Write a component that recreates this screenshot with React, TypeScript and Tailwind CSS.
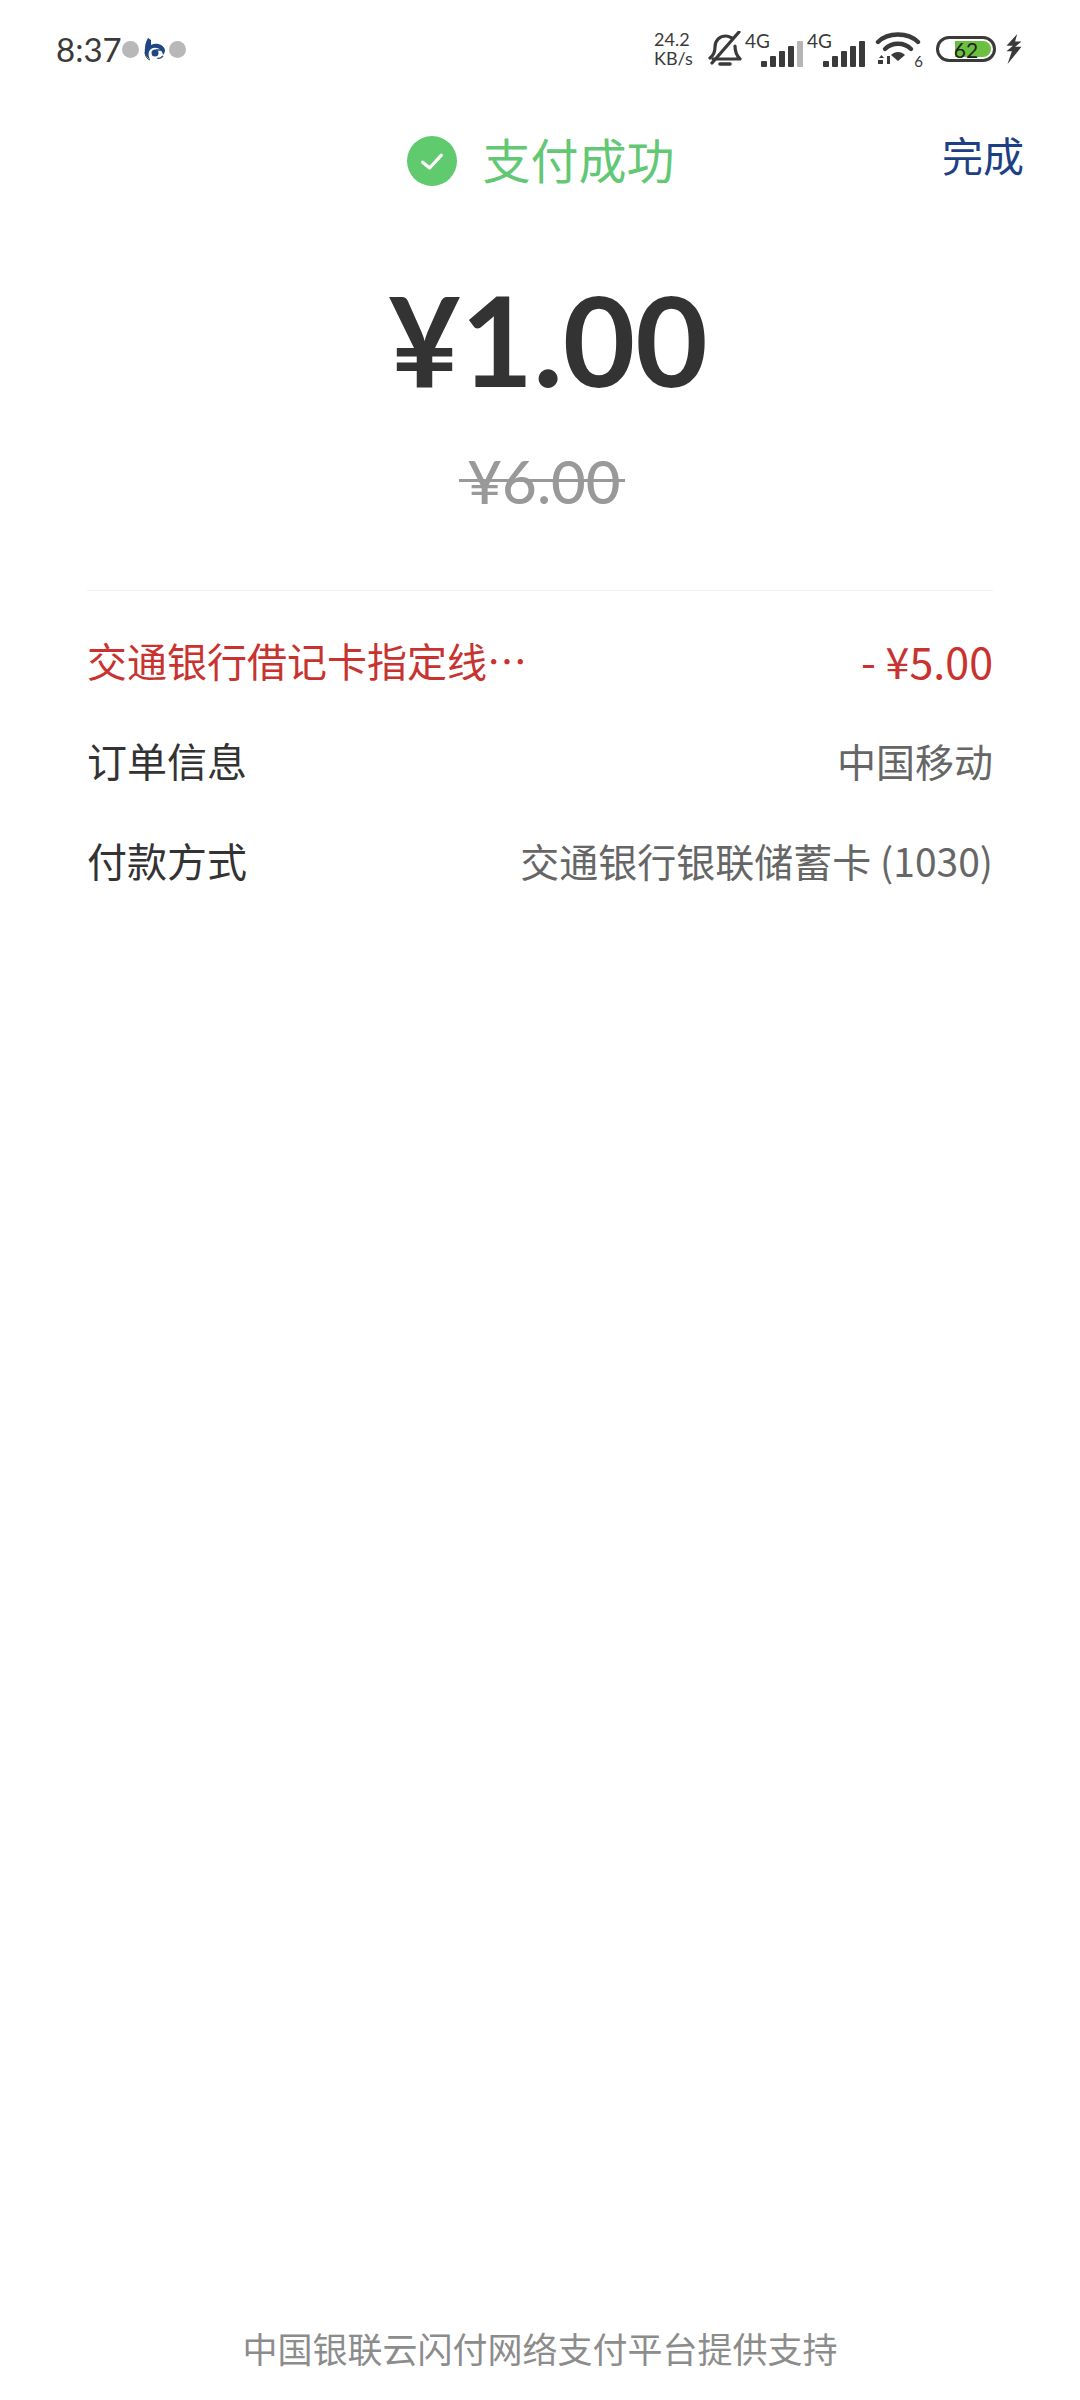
/* Payment success page */
import React from 'react';

const cjk = `font-['Noto_Sans_CJK_SC','Noto_Sans',sans-serif]`;

function UnionLogo() {
  return (
    <svg viewBox="0 0 24 24" className="w-[24px] h-[24px]">
      <path d="M6 1 L9 3 V8 C15 5 22 8 23 13 C23 15 22 17 21 18 C20 12 14 9 9 12 C6 14 6 19 8 22 C4 20 2 16 3 11 C3 8 4 4 6 1Z" fill="#1f4684" />
      <circle cx="13" cy="16" r="3.5" fill="#1f4684" />
      <path d="M14 13 H22 M15 21 C17 22 19 21 21 19" stroke="#1f4684" strokeWidth="1.3" fill="none" />
      <path d="M3 15 C3 19 5 22 8 23" stroke="#333" strokeWidth="1" fill="none" />
    </svg>
  );
}

function BellOff() {
  return (
    <svg viewBox="0 0 34 36" className="w-[34px] h-[36px]" fill="none" stroke="#3a3a3a" strokeWidth="3.2" strokeLinecap="round" strokeLinejoin="round">
      <path d="M2 27 C6 24 7 21 7 16 C7 9 12 5 18 5 C20 5 22 6 24 7" />
      <path d="M27 15 C27 21 29 25 32 28 H5" />
      <path d="M4 32 L31 1" />
      <path d="M12 33 H22" strokeWidth="3.6" />
    </svg>
  );
}

function Signal({ last }: { last: string }) {
  const bars = [6, 11, 16, 21, 26];
  return (
    <span className="flex items-end gap-[3px] h-[28px]">
      {bars.map((h, i) => (
        <span
          key={i}
          className={`w-[6px] rounded-[1px] ${i === 4 ? last : 'bg-[#3a3a3a]'}`}
          style={{ height: h }}
        />
      ))}
    </span>
  );
}

function Wifi() {
  return (
    <svg viewBox="0 0 46 36" className="w-[46px] h-[36px]">
      <g fill="none" stroke="#3a3a3a" strokeWidth="4.4" strokeLinecap="round">
        <path d="M3 11 C13 1 33 1 43 11" />
        <path d="M10 18 C17 11 29 11 36 18" />
      </g>
      <path d="M16 24 C20 20 26 20 30 24 L23 30Z" fill="#3a3a3a" />
      <path d="M4 27 H9 L6.5 24Z M12 25 H15 V33 H12Z M3 29 H8 V33 H3Z" fill="#3a3a3a" />
    </svg>
  );
}

function StatusBar() {
  return (
    <div className="h-[82px] pl-[56px] pr-[57px] pt-[16px] flex items-center justify-between text-[#3a3a3a]">
      <div className="flex items-center">
        <span className="text-[33px] leading-none font-['Lato',sans-serif] w-[66px]">8:37</span>
        <span className="w-[17px] h-[17px] rounded-full bg-[#b8b8b8]" />
        <span className="mx-[3px]"><UnionLogo /></span>
        <span className="w-[17px] h-[17px] rounded-full bg-[#b8b8b8]" />
      </div>
      <div className="flex items-center">
        <div className="flex flex-col text-[18px] leading-[19px] font-['Lato',sans-serif] w-[43px] items-start">
          <span>24.2</span>
          <span>KB/s</span>
        </div>
        <span className="ml-[11px]"><BellOff /></span>
        <span className="relative ml-[3px] w-[58px] h-[36px] flex items-end justify-end">
          <span className="absolute left-0 top-[-4px] text-[19px] font-['Lato',sans-serif]">4G</span>
          <Signal last="bg-[#b5b5b5]" />
        </span>
        <span className="relative ml-[4px] w-[58px] h-[36px] flex items-end justify-end">
          <span className="absolute left-0 top-[-4px] text-[19px] font-['Lato',sans-serif]">4G</span>
          <Signal last="bg-[#3a3a3a]" />
        </span>
        <span className="relative ml-[10px] w-[46px] h-[36px]">
          <Wifi />
          <span className="absolute right-[-2px] bottom-[-2px] text-[15px] leading-none font-['Lato',sans-serif]">6</span>
        </span>
        <span className="relative ml-[15px] w-[60px] h-[26px] rounded-full border-[3px] border-[#3a3a3a] p-[2px] flex">
          <span className="ml-[14px] flex-1 rounded-r-full bg-[#6cc040]" />
          <span className="absolute inset-0 flex items-center justify-center text-[21px] leading-none text-[#222] font-['Lato',sans-serif]">62</span>
        </span>
        <svg viewBox="0 0 16 28" className="ml-[9px] w-[18px] h-[30px]" fill="#3a3a3a">
          <path d="M11 0 L1 11 L7 11 L1 16 L6 16 L2 28 L15 12 L9 12 L15 7 L9 7Z" />
        </svg>
      </div>
    </div>
  );
}

function Row({ label, value, labelColor, valueClass }: { label: string; value: string; labelColor: string; valueClass: string }) {
  return (
    <div className="h-[100px] flex items-center justify-between">
      <span className={`text-[40px] leading-none ${labelColor}`}>{label}</span>
      <span className={`leading-none ${valueClass}`}>{value}</span>
    </div>
  );
}

export default function App() {
  return (
    <div className={`w-[1080px] h-[2400px] bg-white flex flex-col ${cjk}`}>
      <StatusBar />

      {/* Title */}
      <div className="relative mt-[54px] h-[50px] flex items-center justify-center pl-[2px]">
        <span className="w-[50px] h-[50px] rounded-full bg-[#5fcb6e] flex items-center justify-center">
          <svg viewBox="0 0 24 24" className="w-[28px] h-[28px]" fill="none" stroke="white" strokeWidth="2.8" strokeLinecap="round" strokeLinejoin="round">
            <path d="M4 13 L10 18 L20 7" />
          </svg>
        </span>
        <span className="ml-[25px] mb-[6px] text-[48px] leading-none text-[#62c874]">支付成功</span>
        <span className="absolute right-[56px] top-[-2px] text-[41px] leading-none text-[#1c3f86]">完成</span>
      </div>

      {/* Amount */}
      <div className="mt-[88px] flex flex-col items-center">
        <span className="pl-[16px] text-[125px] leading-[130px] font-bold text-[#333333] font-['Lato','Noto_Sans_CJK_SC',sans-serif]">¥1.00</span>
        <span className="relative mt-[44px] ml-[8px] text-[60px] leading-[66px] font-medium text-[#999999] font-['Lato','Noto_Sans_CJK_SC',sans-serif]">
          ¥6.00
          <span className="absolute left-[-8px] right-[-4px] top-[31px] h-[3px] bg-[#999999]" />
        </span>
      </div>

      {/* Details */}
      <div className="mt-[76px] mx-[87px] border-t border-[#f0f0f0] pt-[19px]">
        <Row label="交通银行借记卡指定线…" value="- ¥5.00" labelColor="text-[#c8332f]" valueClass="text-[43px] text-[#c8332f]" />
        <Row label="订单信息" value="中国移动" labelColor="text-[#333333]" valueClass="text-[39px] text-[#666666]" />
        <Row label="付款方式" value="交通银行银联储蓄卡 (1030)" labelColor="text-[#333333]" valueClass="text-[39px] text-[#666666]" />
      </div>

      {/* Footer */}
      <div className="mt-auto pb-[37px] text-center text-[35px] leading-[30px] text-[#8c8c8c]">
        中国银联云闪付网络支付平台提供支持
      </div>
    </div>
  );
}
